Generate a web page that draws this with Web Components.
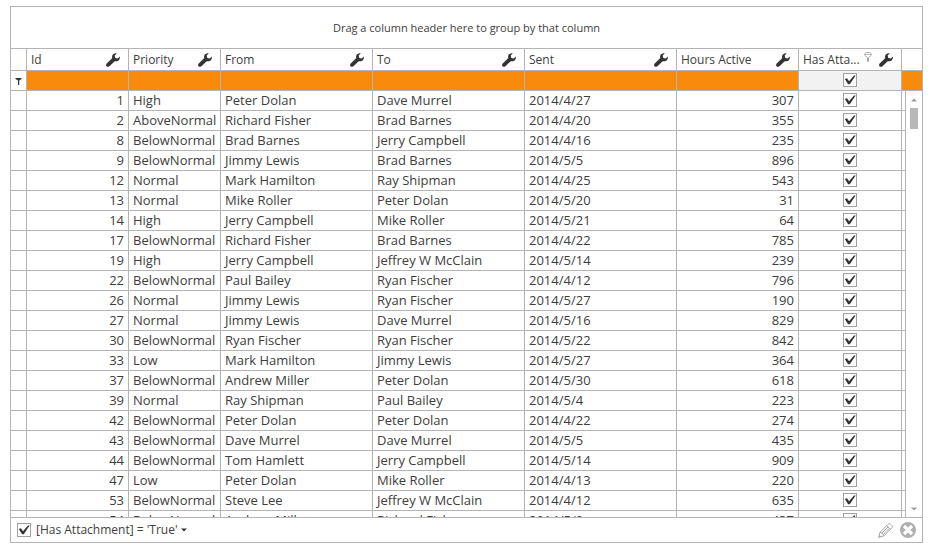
<!DOCTYPE html>
<html lang="en">
<head>
<meta charset="utf-8">
<title>Messages grid</title>
<style>
  body { margin: 0; background: #fff; color: #3d3d3d; font: 13px/20px "Open Sans", "Noto Sans", sans-serif; }
</style>
</head>
<body>
<data-grid>
  <group-panel slot="group">Drag a column header here to group by that column</group-panel>
  <filter-bar slot="footer">[Has Attachment] = 'True'</filter-bar>
</data-grid>

<script>
const define = (name, html, setup) => {
  const template = document.createElement('template');
  template.innerHTML = html;
  customElements.define(name, class extends HTMLElement {
    constructor() {
      super();
      this.attachShadow({ mode: 'open' }).append(template.content.cloneNode(true));
    }
    connectedCallback() {
      if (setup) setup(this, this.shadowRoot);
    }
  });
};

const icons = {
  wrench: [14, 14, '<path fill="#333" d="M10.800.300C8.600-.200 6.700.900 6.200 2.700C5.900 3.700 6.300 4.700 6.100 5.300L.700 10.600C-.200 11.500-.100 12.800.700 13.400C1.500 14.100 2.700 14 3.400 13.200L8.500 8.400C9.100 8 10 8.400 11.100 8.200C13 7.800 14.200 5.900 13.800 3.500L11.700 5.500L9.300 5L8.700 2.500Z"/>'],
  funnel: [7, 8, '<path fill="#333" d="M.5 1H6.500V2L4.200 3.600V8H3V3.600L.5 2Z"/>'],
  pin: [8, 10, '<path fill="#fff" stroke="#aaa" d="M.5 2.500C.5-.2 7.500-.2 7.500 2.500C7.500 4 5 4.500 4.500 5.500V9.500H3.500V5.500C3 4.500.5 4 .5 2.500Z"/><path stroke="#bbb" fill="none" d="M1 2.500H7"/>'],
  pencil: [15, 15, '<path fill="#fff" stroke="#a8a8a8" stroke-linejoin="round" d="M.7 14.300L2 9.300L10 1.300C11 .3 12.200.5 13.200 1.600C14.400 2.700 14.700 4 13.700 5L5.700 13Z"/><path fill="none" stroke="#a8a8a8" d="M2 9.300C3.500 9 6 11.300 5.700 13M8.700 2.600L12.400 6.300M3.700 10.300L10.200 3.800M5.200 11.500L11.500 5.200"/><path fill="#a8a8a8" d="M.5 14.500L1.300 11.900L3.100 13.700Z"/>'],
  close: [16, 16, '<circle cx="8" cy="8" r="8" fill="#b0b0b0"/><path stroke="#fff" stroke-width="3.200" d="M4 4L12 12M12 4L4 12"/>'],
  down: [6, 4, '<path fill="#333" d="M0 0.500H6L3 3.500Z"/>'],
  scrollup: [6, 4, '<path fill="#999" d="M0 3.500H6L3 .5Z"/>'],
  scrolldown: [6, 4, '<path fill="#999" d="M0 0.500H6L3 3.500Z"/>'],
};

define('ui-icon', '<style>:host{display:inline-flex;flex:none}svg{display:block}</style>', (el, root) => {
  const [w, h, art] = icons[el.getAttribute('name')];
  root.innerHTML += `<svg width="${w}" height="${h}" viewBox="0 0 ${w} ${h}" aria-hidden="true">${art}</svg>`;
});

define('check-box', `
  <style>
    :host { display: inline-flex; vertical-align: top; }
    label { display: inline-flex; align-items: center; }
    span { display: inline-grid; }
    input, svg { grid-area: 1 / 1; }
    input { appearance: none; box-sizing: border-box; width: 14px; height: 14px; margin: 0; border: 1px solid #a0a0a0; background: #fff; }
    svg { pointer-events: none; visibility: hidden; }
    input:checked + svg { visibility: visible; }
  </style>
  <label><span><input type="checkbox" checked><svg width="14" height="14" viewBox="0 0 14 14" aria-hidden="true"><path fill="#333" d="M1.800 6L4 5.200L6 8.200L11 2.500H12.600L6.800 11.300H5.100Z"/></svg></span></label>`,
  (el, root) => root.querySelector('input').setAttribute('aria-label', el.getAttribute('label')));

define('group-panel', `
  <style>
    :host { display: flex; align-items: center; justify-content: center; min-height: 41px; border-bottom: 1px solid #b4b4b4; font-size: 11px; }
  </style>
  <slot></slot>`);

define('grid-scrollbar', `
  <style>
    :host { display: flex; flex-direction: column; align-items: center; box-sizing: border-box; width: 16px; padding: 7px 0 6px; }
    .track { flex: 1; width: 8px; padding-top: 6px; }
    .thumb { height: 21px; background: #b8b8b8; }
    button { display: flex; padding: 0; border: 0; background: none; }
  </style>
  <button aria-label="Scroll up"><ui-icon name="scrollup"></ui-icon></button>
  <div class="track"><div class="thumb"></div></div>
  <button aria-label="Scroll down"><ui-icon name="scrolldown"></ui-icon></button>`);

define('filter-bar', `
  <style>
    :host { display: flex; align-items: center; min-height: 24px; padding: 0 6px; border-top: 1px solid #b4b4b4; }
    button { display: flex; align-items: center; gap: 3px; padding: 0; border: 0; background: none; color: inherit; font: inherit; font-size: 12px; }
    .text { margin-left: 5px; }
    .actions { display: flex; align-items: center; gap: 7px; margin-left: auto; }
  </style>
  <check-box label="Filter enabled"></check-box>
  <button class="text"><span><slot></slot></span><ui-icon name="down"></ui-icon></button>
  <div class="actions">
    <button aria-label="Edit filter"><ui-icon name="pencil"></ui-icon></button>
    <button aria-label="Clear filter"><ui-icon name="close"></ui-icon></button>
  </div>`);

const columns = ['Id', 'Priority', 'From', 'To', 'Sent', 'Hours Active', 'Has Attachment'];
const captions = { 'Has Attachment': 'Has Atta...' };
const rows = `1|High|Peter Dolan|Dave Murrel|2014/4/27|307
2|AboveNormal|Richard Fisher|Brad Barnes|2014/4/20|355
8|BelowNormal|Brad Barnes|Jerry Campbell|2014/4/16|235
9|BelowNormal|Jimmy Lewis|Brad Barnes|2014/5/5|896
12|Normal|Mark Hamilton|Ray Shipman|2014/4/25|543
13|Normal|Mike Roller|Peter Dolan|2014/5/20|31
14|High|Jerry Campbell|Mike Roller|2014/5/21|64
17|BelowNormal|Richard Fisher|Brad Barnes|2014/4/22|785
19|High|Jerry Campbell|Jeffrey W McClain|2014/5/14|239
22|BelowNormal|Paul Bailey|Ryan Fischer|2014/4/12|796
26|Normal|Jimmy Lewis|Ryan Fischer|2014/5/27|190
27|Normal|Jimmy Lewis|Dave Murrel|2014/5/16|829
30|BelowNormal|Ryan Fischer|Ryan Fischer|2014/5/22|842
33|Low|Mark Hamilton|Jimmy Lewis|2014/5/27|364
37|BelowNormal|Andrew Miller|Peter Dolan|2014/5/30|618
39|Normal|Ray Shipman|Paul Bailey|2014/5/4|223
42|BelowNormal|Peter Dolan|Peter Dolan|2014/4/22|274
43|BelowNormal|Dave Murrel|Dave Murrel|2014/5/5|435
44|BelowNormal|Tom Hamlett|Jerry Campbell|2014/5/14|909
47|Low|Peter Dolan|Mike Roller|2014/4/13|220
53|BelowNormal|Steve Lee|Jeffrey W McClain|2014/4/12|635
54|BelowNormal|Andrew Miller|Richard Fisher|2014/5/9|437`.split('\n').map(r => r.split('|'));

const colgroup = end => `<colgroup><col class="mark"><col class="id"><col class="priority"><col><col><col><col class="hours"><col class="attachment"><col class="${end}"></colgroup>`;

define('data-grid', `
  <style>
    :host { display: flex; box-sizing: border-box; height: 100vh; padding: 6px 16px 8px 10px; }
    .frame { flex: 1; min-width: 0; display: flex; flex-direction: column; border: 1px solid #b4b4b4; }
    table { width: 100%; table-layout: fixed; border-collapse: separate; border-spacing: 0; }
    .mark { width: 16px; } .id { width: 102px; } .priority { width: 92px; }
    .hours { width: 122px; } .attachment { width: 103px; } .wide { width: 20px; } .thin { width: 4px; }
    th, td { box-sizing: border-box; height: 20px; padding: 0 4px; border: solid #b4b4b4; border-width: 0 1px 1px 0; font-weight: normal; text-align: left; line-height: 19px; white-space: nowrap; overflow: hidden; }
    th { height: 22px; padding-right: 8px; font-size: 12px; }
    th:first-child, td:first-child, th:last-child, td:last-child { padding: 0; }
    thead th:last-child, thead td:last-child { border-right: 0; }
    .number { text-align: right; }
    .check { padding-top: 2px; text-align: center; vertical-align: top; line-height: 0; }
    .caption { display: flex; align-items: center; gap: 4px; }
    .caption [name=pin] { align-self: flex-start; padding-top: 2px; }
    .caption button { margin-left: auto; }
    button { display: flex; padding: 0; border: 0; background: none; }
    .filter td { background: #f88b0b; }
    .filter td:first-child { background: none; text-align: center; line-height: 0; }
    .filter .check { background: #f2f2f2; }
    .body { flex: 1 1 0; min-height: 0; display: flex; }
    .view { flex: 1; min-width: 0; overflow: hidden; }
  </style>
  <div class="frame">
    <slot name="group"></slot>
    <table class="head">
      ${colgroup('wide')}
      <thead>
        <tr><th></th>${columns.map(c => `<th scope="col"><div class="caption"><span>${captions[c] || c}</span>${captions[c] ? '<ui-icon name="pin"></ui-icon>' : ''}<button aria-label="${c} options"><ui-icon name="wrench"></ui-icon></button></div></th>`).join('')}<th></th></tr>
        <tr class="filter"><td><ui-icon name="funnel"></ui-icon></td>${'<td></td>'.repeat(6)}<td class="check"><check-box label="Filter by attachment"></check-box></td><td></td></tr>
      </thead>
    </table>
    <div class="body">
      <div class="view">
        <table>
          ${colgroup('thin')}
          <tbody>${rows.map(r => `<tr><td></td>${r.map((v, i) => `<td${i === 0 || i === 5 ? ' class="number"' : ''}>${v}</td>`).join('')}<td class="check"><check-box label="Has attachment, row ${r[0]}"></check-box></td><td></td></tr>`).join('')}</tbody>
        </table>
      </div>
      <grid-scrollbar></grid-scrollbar>
    </div>
    <slot name="footer"></slot>
  </div>`);
</script>
</body>
</html>
